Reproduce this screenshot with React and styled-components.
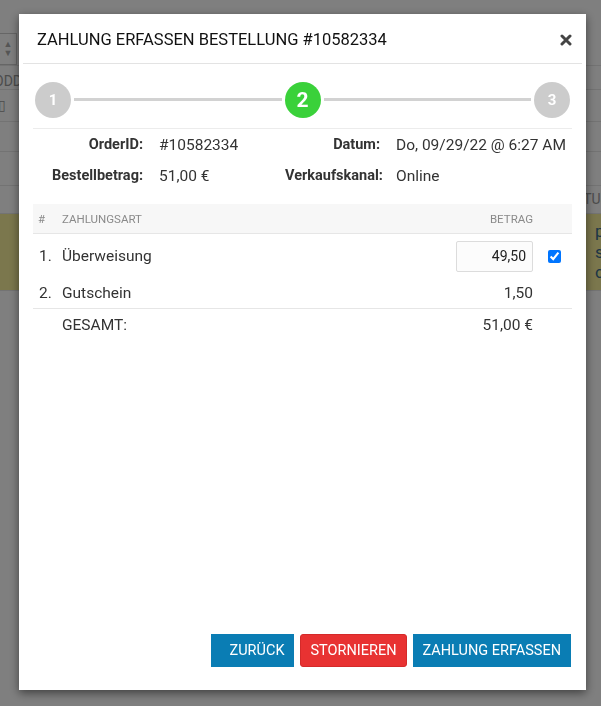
import React from 'react'
import styled, {createGlobalStyle} from 'styled-components'

const GlobalStyle = createGlobalStyle`
  html, body {
    margin: 0;
    padding: 0;
    background: #fff;
    font-family: Roboto, "Liberation Sans", Arial, sans-serif;
    color: #333;
  }
  * { box-sizing: border-box; }
`

// page behind the dialog, only its edges show
const Page = styled.div`
  width: 601px;
  height: 706px;
  overflow: hidden;
  display: flex;
  flex-direction: column;
  padding-top: 33px;
`
const PageRow = styled.div`
  height: ${p => p.h}px;
  flex: none;
  border-bottom: 1px solid #e6e6e6;
  display: flex;
  justify-content: space-between;
  align-items: center;
  background: ${p => p.warn ? '#f7ee9a' : 'transparent'};
  color: ${p => p.warn ? '#3a6b8c' : '#999'};
  font-size: ${p => p.warn ? 17 : 14}px;
  line-height: 1.2;
`
const SpinBox = styled.div`
  width: 17px;
  height: 32px;
  border: 1px solid #ccc;
  border-left: none;
  color: #aaa;
  font-size: 9px;
  line-height: 9px;
  display: flex;
  flex-direction: column;
  justify-content: center;
  align-items: center;
`
const EdgeText = styled.span`
  white-space: nowrap;
  margin-left: ${p => p.left || 0}px;
  margin-right: ${p => p.right || 0}px;
  margin-top: ${p => p.top || 0}px;
`
const WarnText = styled.div`
  display: flex;
  flex-direction: column;
  margin-right: -14px;
  width: 20px;
  overflow: hidden;
`

const Overlay = styled.div`
  position: fixed;
  inset: 0;
  background: rgba(0, 0, 0, 0.5);
`

const Modal = styled.div`
  position: fixed;
  left: 19px;
  top: 14px;
  width: 567px;
  height: 676px;
  background: #fff;
  box-shadow: 0 3px 9px rgba(0, 0, 0, 0.5);
  display: flex;
  flex-direction: column;
`
const Header = styled.div`
  height: 50px;
  margin: 0 4px;
  padding: 0 10px 0 14px;
  border-bottom: 1px solid #e3e3e3;
  display: flex;
  align-items: center;
  justify-content: space-between;
`
const Title = styled.h4`
  margin: 0;
  font-size: 16.5px;
  font-weight: 400;
  color: #111;
  padding-top: 2px;
`
const Close = styled.button`
  border: none;
  background: none;
  padding: 0;
  margin-top: 2px;
  width: 12px;
  height: 12px;
  display: flex;
  cursor: pointer;
`

const Body = styled.div`
  flex: 1;
  padding: 0 14px;
  display: flex;
  flex-direction: column;
`

const Stepper = styled.div`
  height: 65px;
  padding: 18px 2px 0;
  border-bottom: 1px solid #ececec;
  display: flex;
  align-items: flex-start;
`
const Step = styled.div`
  width: 36px;
  height: 36px;
  border-radius: 50%;
  flex: none;
  background: ${p => p.active ? '#3ad13a' : '#cccccc'};
  color: #fff;
  font-weight: 700;
  font-size: ${p => p.active ? 21 : 15}px;
  display: flex;
  align-items: center;
  justify-content: center;
`
const StepLine = styled.div`
  flex: 1;
  height: 3px;
  margin: 16px 3px 0;
  background: #d2d2d2;
`

const Info = styled.div`
  display: grid;
  grid-template-columns: 110px 110px 95px auto;
  column-gap: 16px;
  grid-auto-rows: 31px;
  align-items: center;
  font-size: 15.5px;
`
const Label = styled.div`
  text-align: right;
  font-weight: 700;
  font-size: 14.5px;
  color: #333;
  white-space: nowrap;
`
const Value = styled.div`
  color: #333;
  white-space: nowrap;
`

const Table = styled.div`
  margin-top: 13px;
  display: flex;
  flex-direction: column;
`
const Row = styled.div`
  display: grid;
  grid-template-columns: 29px 1fr 90px 39px;
  align-items: center;
  height: ${p => p.h}px;
  background: ${p => p.head ? '#f7f7f7' : 'transparent'};
  border-bottom: ${p => p.line ? '1px solid #e6e6e6' : 'none'};
  color: ${p => p.head ? '#8a8a8a' : '#333'};
  font-size: ${p => p.head ? 11.5 : 15.5}px;
`
const Cell = styled.div`
  padding-left: ${p => p.pl || 0}px;
  text-align: ${p => p.right ? 'right' : 'left'};
  display: ${p => p.center ? 'flex' : 'block'};
  justify-content: center;
  white-space: nowrap;
`
const AmountInput = styled.input`
  width: 77px;
  height: 31px;
  margin-left: 13px;
  border: 1px solid #dcdcdc;
  border-radius: 2px;
  background: #fcfcfc;
  text-align: right;
  padding: 0 6px;
  font-family: Roboto, "Liberation Sans", Arial, sans-serif;
  font-size: 14px;
  color: #222;
`
const Check = styled.input`
  width: 13px;
  height: 13px;
  margin: 0 0 0 4px;
`

const Footer = styled.div`
  display: flex;
  justify-content: flex-end;
  gap: 6px;
  padding: 0 15px 23px;
`
const Button = styled.button`
  height: 33px;
  padding: 0 9px 0 ${p => p.pl || 9}px;
  border: 1px solid ${p => p.danger ? '#d42a2a' : '#0a7db4'};
  border-radius: ${p => p.danger ? 3 : 0}px;
  background: ${p => p.danger ? '#e83232' : '#0a7db4'};
  color: #fff;
  font-family: Roboto, "Liberation Sans", Arial, sans-serif;
  font-size: 14.5px;
  text-transform: uppercase;
  cursor: pointer;
`

export default function App() {
  return (
    <>
      <GlobalStyle />
      <Page>
        <PageRow h={33}><SpinBox>▲<br/>▼</SpinBox></PageRow>
        <PageRow h={24}><EdgeText left={-6} top={8}>ODDA</EdgeText></PageRow>
        <PageRow h={32}><EdgeText left={-2}>▯</EdgeText></PageRow>
        <PageRow h={30} />
        <PageRow h={34} />
        <PageRow h={28}><span /><EdgeText right={-8}>STATUS</EdgeText></PageRow>
        <PageRow h={77} warn><span /><WarnText><span>pe</span><span>ss</span><span>ck</span></WarnText></PageRow>
      </Page>
      <Overlay />
      <Modal>
        <Header>
          <Title>ZAHLUNG ERFASSEN BESTELLUNG #10582334</Title>
          <Close aria-label="close">
            <svg width="12" height="12" viewBox="0 0 12 12">
              <path d="M2 2 L10 10 M10 2 L2 10" stroke="#444" strokeWidth="3" strokeLinecap="round" />
            </svg>
          </Close>
        </Header>
        <Body>
          <Stepper>
            <Step>1</Step>
            <StepLine />
            <Step active>2</Step>
            <StepLine />
            <Step>3</Step>
          </Stepper>
          <Info>
            <Label>OrderID:</Label>
            <Value>#10582334</Value>
            <Label>Datum:</Label>
            <Value>Do, 09/29/22 @ 6:27 AM</Value>
            <Label>Bestellbetrag:</Label>
            <Value>51,00 €</Value>
            <Label>Verkaufskanal:</Label>
            <Value>Online</Value>
          </Info>
          <Table>
            <Row head line h={30}>
              <Cell pl={5}>#</Cell>
              <Cell>ZAHLUNGSART</Cell>
              <Cell right>BETRAG</Cell>
              <Cell />
            </Row>
            <Row h={44}>
              <Cell pl={6}>1.</Cell>
              <Cell>Überweisung</Cell>
              <Cell><AmountInput defaultValue="49,50" /></Cell>
              <Cell center><Check type="checkbox" defaultChecked /></Cell>
            </Row>
            <Row line h={31}>
              <Cell pl={6}>2.</Cell>
              <Cell>Gutschein</Cell>
              <Cell right>1,50</Cell>
              <Cell />
            </Row>
            <Row h={32}>
              <Cell />
              <Cell>GESAMT:</Cell>
              <Cell right>51,00 €</Cell>
              <Cell />
            </Row>
          </Table>
        </Body>
        <Footer>
          <Button pl={18}>Zurück</Button>
          <Button danger>Stornieren</Button>
          <Button>Zahlung erfassen</Button>
        </Footer>
      </Modal>
    </>
  )
}
